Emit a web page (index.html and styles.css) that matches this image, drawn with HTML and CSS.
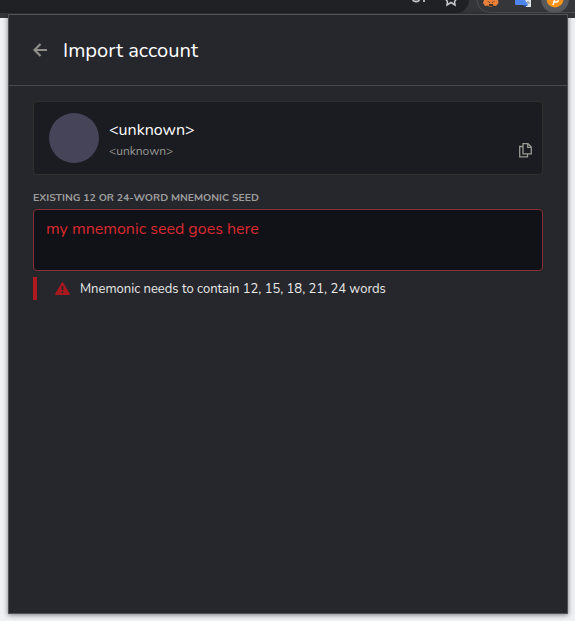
FILE: index.html
```html
<!DOCTYPE html>
<html lang="en">
<head>
<meta charset="utf-8">
<title>Import account</title>
<link rel="stylesheet" href="styles.css">
</head>
<body>
<div class="toolbar">
  <div class="omnibox"></div>
  <svg class="toolbar-icons" width="175" height="14" viewBox="0 0 175 14">
    <path d="M77 0C78 8 83 12.500 91 12.500H175" fill="none" stroke="#505155"/>
    <path d="M13 0a3 1.500 0 0 0 6 0M24 0v2" fill="none" stroke="#bdc1c6" stroke-width="1.800"/>
    <path d="M46 0l1.500 1.500L47 5l4-2.500L55 5l-.500-3.500L56 0" fill="none" stroke="#c8cacd" stroke-width="1.500"/>
    <path d="M84 0h14l.5 3-2.500 3-3-.5-1 1h-3l-1-1-3 .5L83 3z" fill="#e8803a"/>
    <path d="M87 1l3 1v1zM95 1l-3 1v1zM89 4h4v2h-4z" fill="#4b3023"/>
    <path d="M123 0h8v7h-5l-1-2z" fill="#dfe2e5"/>
    <path d="M128 1v3M126 3h4" stroke="#8a96a8"/>
    <path d="M115 0h10l3 5h-12q-1 0-1-1z" fill="#4e86ee"/>
    <path d="M123 5h5l-3 2z" fill="#2453b3"/>
    <circle cx="155" cy="-1" r="14" fill="#57595c"/>
    <circle cx="155" cy="-1" r="8.500" fill="#f7931a"/>
    <path d="M153 5l2-6M153 2h4q2-1 1-3" fill="none" stroke="#fff" stroke-width="1.400"/>
  </svg>
</div>
<main class="popup">
  <header class="header">
    <svg class="back" width="15" height="15" viewBox="0 0 15 15"><path d="M7.500 1L1.500 7l6 6M2 7h12" fill="none" stroke="#8f8e89" stroke-width="2.200"/></svg>
    <h1 class="title">Import account</h1>
  </header>
  <section class="account">
    <div class="avatar"></div>
    <div class="info">
      <div class="name">&lt;unknown&gt;</div>
      <div class="address">&lt;unknown&gt;</div>
    </div>
    <svg class="copy" width="13" height="15" viewBox="0 0 13 15"><path d="M4 .7h5l3.300 3.300v6.800H4zM8.700 .7v3.600h3.600M4 3.500H.7v10.300h7.800v-3" fill="none" stroke="#999893" stroke-width="1.300"/></svg>
  </section>
  <div class="label">EXISTING 12 OR 24-WORD MNEMONIC SEED</div>
  <div class="seed"><span>my mnemonic seed goes here</span></div>
  <div class="warning">
    <svg width="15" height="13" viewBox="0 0 15 13"><path d="M7.500 .8L14.200 12.200H.8z" fill="#a9191d" stroke="#a9191d" stroke-width="1.400" stroke-linejoin="round"/><path d="M7.500 4v4M7.500 9.300v1.800" stroke="#26272c" stroke-width="1.700"/></svg>
    <span class="message">Mnemonic needs to contain 12, 15, 18, 21, 24 words</span>
  </div>
</main>
</body>
</html>
```
FILE: styles.css
```css
* { box-sizing: border-box; }
body {
  margin: 0;
  height: 621px;
  overflow: hidden;
  background: #eff1f5;
  font-family: Nunito, "Noto Sans", sans-serif;
  color: #fff;
}
.toolbar {
  display: flex;
  justify-content: space-between;
  height: 18px;
  margin-bottom: -4px;
  background: #35363a;
}
.omnibox {
  width: 469px;
  height: 13px;
  margin-right: -69px;
  background: #202124;
  border-radius: 0 0 14px 0;
}
.toolbar-icons { position: relative; flex: none; }
.popup {
  position: relative;
  width: 560px;
  height: 600px;
  margin-left: 8px;
  background: #26272c;
  border: 1px solid #515257;
  box-shadow: 0 1px 5px rgba(0, 0, 0, .5);
}
.header {
  display: flex;
  align-items: center;
  height: 71px;
  padding-left: 24px;
  border-bottom: 1px solid #47484d;
}
.title {
  margin: 2px 0 0 15px;
  font-size: 20.1px;
  font-weight: 400;
  line-height: 28px;
}
.account {
  display: flex;
  width: 510px;
  height: 74px;
  margin: 15px 24px 0;
  padding: 11px 10px 0 15px;
  background: #1b1c21;
  border: 1px solid #303030;
  border-radius: 4px;
}
.avatar {
  width: 50px;
  height: 50px;
  border-radius: 50%;
  background: #454459;
}
.info { flex: 1; margin-left: 10px; }
.name { margin-top: 6px; font-size: 16px; line-height: 22px; }
.address { font-size: 12px; line-height: 20px; color: #999893; }
.copy { margin-top: 30px; }
.label {
  margin: 15px 24px 0;
  font-size: 10.45px;
  font-weight: 700;
  line-height: 16px;
  color: #9d9d9d;
  white-space: nowrap;
}
.seed {
  width: 510px;
  height: 62px;
  margin: 3px 24px 0;
  padding: 8px 12px;
  background: #111217;
  border: 1px solid #823235;
  border-radius: 4px;
  font-size: 16px;
  line-height: 22px;
  color: #d9292e;
}
.warning {
  display: flex;
  align-items: center;
  height: 23px;
  margin: 6px 24px 0;
  padding-left: 18px;
  border-left: 4px solid #ae1a1e;
}
.message {
  margin-left: 10px;
  font-size: 13px;
  line-height: 20px;
  color: #e9e9e8;
  white-space: nowrap;
}
```
